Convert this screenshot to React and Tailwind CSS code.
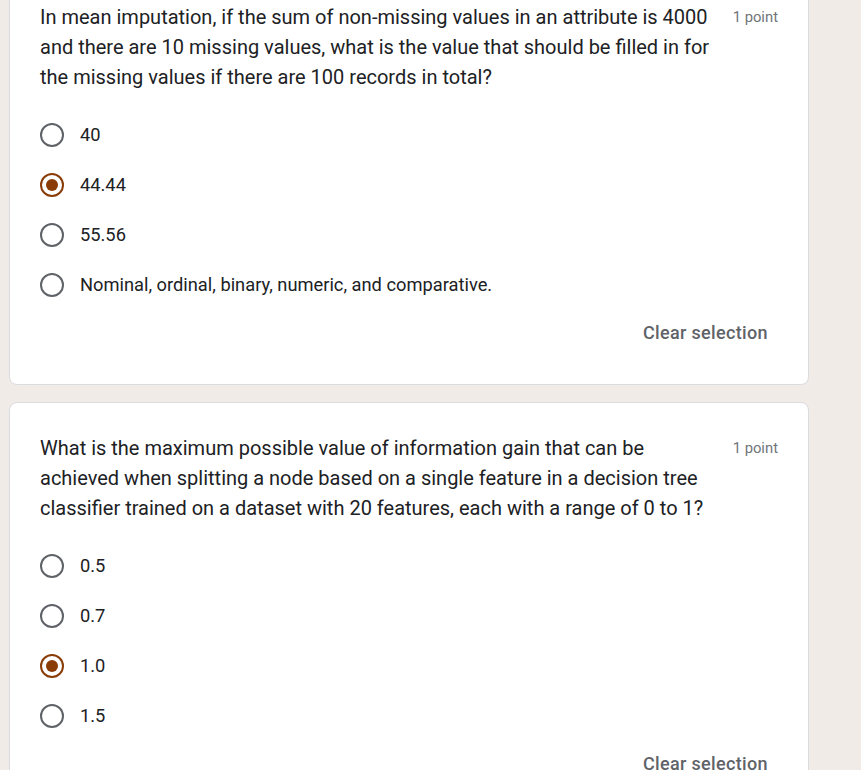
import React from 'react';

const questions = [
  {
    id: 1,
    text: 'In mean imputation, if the sum of non-missing values in an attribute is 4000 and there are 10 missing values, what is the value that should be filled in for the missing values if there are 100 records in total?',
    options: ['40', '44.44', '55.56', 'Nominal, ordinal, binary, numeric, and comparative.'],
    selected: 1,
  },
  {
    id: 2,
    text: 'What is the maximum possible value of information gain that can be achieved when splitting a node based on a single feature in a decision tree classifier trained on a dataset with 20 features, each with a range of 0 to 1?',
    options: ['0.5', '0.7', '1.0', '1.5'],
    selected: 2,
  },
];

const Radio = ({ checked }) => (
  <div
    className={`w-[24px] h-[24px] rounded-full border-2 flex items-center justify-center shrink-0 ${
      checked ? 'border-[#8a3c07]' : 'border-[#5f6368]'
    }`}
  >
    {checked && <div className="w-[12px] h-[12px] rounded-full bg-[#8a3c07]" />}
  </div>
);

const QuestionCard = ({ q }) => (
  <div className="bg-white border border-[#dadce0] rounded-lg pt-[30px] pb-[39px] pl-[30px] pr-[30px]">
    {/* Header */}
    <div className="flex items-start">
      <div className="flex-1 text-[20px] leading-[30px] text-[#202124] pr-[20px]">{q.text}</div>
      <div className="text-[14.8px] leading-[30px] text-[#70757a] whitespace-nowrap">1 point</div>
    </div>

    {/* Options */}
    <div className="mt-[18px] flex flex-col">
      {q.options.map((opt, i) => (
        <div key={opt} className="h-[50px] flex items-center gap-[16px]">
          <Radio checked={i === q.selected} />
          <span className="text-[18.3px] text-[#202124]">{opt}</span>
        </div>
      ))}
    </div>

    <div className="flex justify-end mt-[11px] pr-[10px]">
      <span className="text-[18px] leading-[24px] font-medium tracking-[0.35px] text-[#5f6368]">
        Clear selection
      </span>
    </div>
  </div>
);

export default function App() {
  return (
    <div
      className="min-h-screen h-[770px] overflow-hidden bg-[#f0ebe7]"
      style={{ fontFamily: 'Roboto, "Liberation Sans", sans-serif' }}
    >
      <div className="ml-[9px] w-[800px] -mt-[29px] flex flex-col gap-[17px]">
        {questions.map((q) => (
          <QuestionCard key={q.id} q={q} />
        ))}
      </div>
    </div>
  );
}
